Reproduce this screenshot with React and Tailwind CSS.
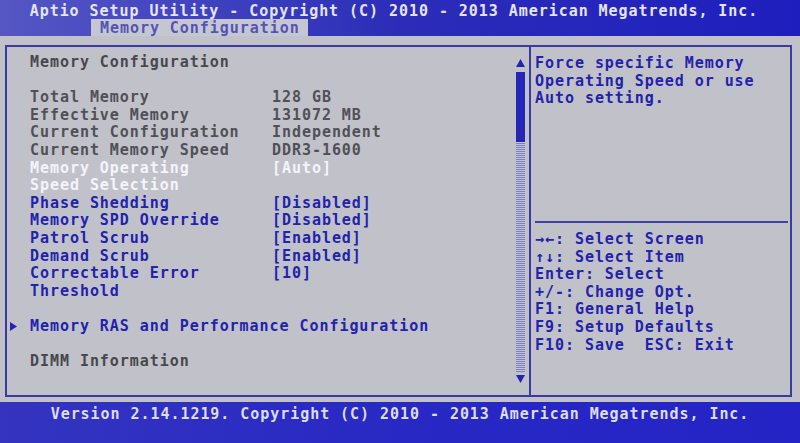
import React from "react";

const mono = "font-['DejaVu_Sans_Mono','Liberation_Mono',monospace] font-bold tracking-[0.95px] text-[15px] leading-[17.6px]";

const GRAY = "text-[#505056]";
const WHITE = "text-[#f4f4fa]";
const BLUE = "text-[#2222ac]";

// left panel rows: [label, value, colour]
const rows = [
  ["Memory Configuration", "", "text-[#48484c]"],
  ["", "", GRAY],
  ["Total Memory", "128 GB", GRAY],
  ["Effective Memory", "131072 MB", GRAY],
  ["Current Configuration", "Independent", GRAY],
  ["Current Memory Speed", "DDR3-1600", GRAY],
  ["Memory Operating", "[Auto]", WHITE],
  ["Speed Selection", "", WHITE],
  ["Phase Shedding", "[Disabled]", BLUE],
  ["Memory SPD Override", "[Disabled]", BLUE],
  ["Patrol Scrub", "[Enabled]", BLUE],
  ["Demand Scrub", "[Enabled]", BLUE],
  ["Correctable Error", "[10]", BLUE],
  ["Threshold", "", BLUE],
  ["", "", GRAY],
];

const help = [
  "→←: Select Screen",
  "↑↓: Select Item",
  "Enter: Select",
  "+/-: Change Opt.",
  "F1: General Help",
  "F9: Setup Defaults",
  "F10: Save  ESC: Exit",
];

function Row({ label, value, color }) {
  return (
    <div className={`flex h-[17.6px] whitespace-pre ${color}`}>
      <div className="w-[242px] shrink-0">{label}</div>
      <div>{value}</div>
    </div>
  );
}

function ScrollBar() {
  return (
    <div className="w-[9px] mr-[4px] flex flex-col items-center pt-[12px] pb-[12px]">
      <svg width="9" height="8" viewBox="0 0 9 8">
        <path d="M4.5 0 L9 8 L0 8 Z" fill="#2424b0" />
      </svg>
      <div className="mt-[5px] w-[9px] h-[70px] bg-[#2626b4]" />
      <div className="w-[9px] flex-1 bg-[repeating-linear-gradient(0deg,#7e7ebe_0px,#7e7ebe_1px,#c4c4d8_1px,#c4c4d8_2px)]" />
      <svg width="9" height="8" viewBox="0 0 9 8" className="mt-[3px]">
        <path d="M0 0 L9 0 L4.5 8 Z" fill="#2424b0" />
      </svg>
    </div>
  );
}

export default function App() {
  return (
    <div className={`w-[800px] h-[443px] flex flex-col bg-[#c1c1ca] overflow-hidden ${mono}`}>
      {/* title bar with the active tab */}
      <header className="h-[36px] shrink-0 flex flex-col bg-gradient-to-r from-[#5656c4] via-[#2c2cb8] to-[#1e1ebe]">
        <div className="h-[19px] pt-[3px] pr-[12px] leading-[16px] text-center text-[#e4e4f4] whitespace-pre">
          Aptio Setup Utility - Copyright (C) 2010 - 2013 American Megatrends, Inc.
        </div>
        <div className="h-[17px] flex">
          <div className="ml-[91px] w-[217px] bg-[#c6c6d2] pl-[9px] pt-[1px] leading-[16px] text-[#5454b4]">
            Memory Configuration
          </div>
        </div>
      </header>

      {/* main setup frame */}
      <main className="flex-1 pt-[9px] pb-[5px] pl-[5px] pr-[8px] flex">
        <div className="flex-1 flex border-2 border-[#3a3aa2]">
          {/* item list */}
          <section className="w-[524px] flex border-r-2 border-[#3a3aa2]">
            <div className="flex-1 pl-[23px] pt-[7px]">
              {rows.map(([l, v, c], i) => (
                <Row key={i} label={l} value={v} color={c} />
              ))}
              <div className={`flex items-center h-[17.6px] -ml-[20px] whitespace-pre ${BLUE}`}>
                <div className="w-[20px] shrink-0 flex items-center">
                  <svg width="7" height="9" viewBox="0 0 7 9">
                    <path d="M0 0 L7 4.5 L0 9 Z" fill="#2424b0" />
                  </svg>
                </div>
                <span>Memory RAS and Performance Configuration</span>
              </div>
              <div className="h-[17.6px]" />
              <Row label="DIMM Information" value="" color="text-[#48484c]" />
            </div>
            <ScrollBar />
          </section>

          {/* help column */}
          <aside className={`flex-1 flex flex-col ${BLUE}`}>
            <div className="h-[174px] pl-[4px] pt-[8px] whitespace-pre">
              <div>Force specific Memory</div>
              <div>Operating Speed or use</div>
              <div>Auto setting.</div>
            </div>
            <div className="ml-[4px] mr-[2px] h-[2px] bg-[#4040a8]" />
            <div className="pl-[4px] pt-[8px] whitespace-pre">
              {help.map((h) => (
                <div key={h}>{h}</div>
              ))}
            </div>
          </aside>
        </div>
      </main>

      {/* version line */}
      <footer className="h-[41px] shrink-0 pt-[4px] text-center text-[#dcdcf2] whitespace-pre bg-gradient-to-r from-[#3434c0] via-[#2828c4] to-[#2424c6]">
        Version 2.14.1219. Copyright (C) 2010 - 2013 American Megatrends, Inc.
      </footer>
    </div>
  );
}
